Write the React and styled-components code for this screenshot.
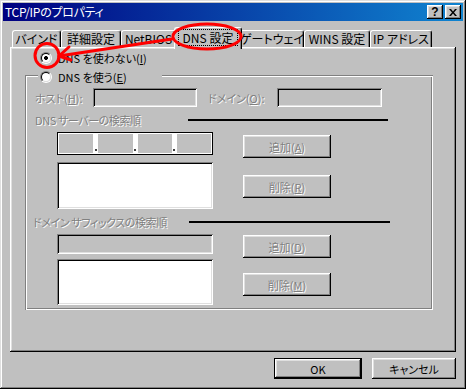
import styled, { createGlobalStyle, css } from "styled-components";

const GlobalStyle = createGlobalStyle`
    html, body {
        margin: 0;
        padding: 0;
        background: #c0c0c0;
    }
    body {
        font-family: "Noto Sans CJK JP", "Noto Sans", sans-serif;
        font-size: 11px;
        font-feature-settings: "palt";
        line-height: 16px;
        color: #000;
    }
`;

const raised = css`
    box-shadow: inset -1px -1px #000, inset 1px 1px #fff, inset -2px -2px #808080, inset 2px 2px #dfdfdf;
`;

const sunken = css`
    box-shadow: inset 1px 1px #808080, inset -1px -1px #fff, inset 2px 2px #000, inset -2px -2px #dfdfdf;
`;

const disabledText = css`
    color: #808080;
    text-shadow: 1px 1px 0 #fff;
`;

const S = {
    Window : styled.div`
        position: relative;
        box-sizing: border-box;
        width: 466px;
        height: 389px;
        padding: 3px;
        background: #c0c0c0;
        box-shadow: inset -1px -1px #000, inset 1px 1px #dfdfdf, inset -2px -2px #808080, inset 2px 2px #fff;
        display: flex;
        flex-direction: column;
    `,
    TitleBar : styled.div`
        flex: none;
        height: 18px;
        display: flex;
        align-items: center;
        gap: 2px;
        padding: 0 2px;
        background: linear-gradient(90deg, #000080, #1084d0);
        color: #fff;
    `,
    Title : styled.span`
        flex: 1;
        white-space: nowrap;
        font-size: 12px;
        letter-spacing: -0.3px;
    `,
    TitleButton : styled.div`
        box-sizing: border-box;
        width: 16px;
        height: 14px;
        display: flex;
        align-items: center;
        justify-content: center;
        background: #c0c0c0;
        color: #000;
        font-family: "Liberation Sans", sans-serif;
        font-weight: 700;
        font-size: 12px;
        ${raised}
    `,
    Body : styled.div`
        display: flex;
        flex-direction: column;
        padding: 6px 7px 0;
    `,
    TabStrip : styled.div`
        display: flex;
        align-items: flex-end;
        height: 20px;
        padding-left: 2px;
    `,
    Tab : styled.div`
        box-sizing: border-box;
        width: ${p => p.$w}px;
        height: 17px;
        display: flex;
        align-items: center;
        justify-content: center;
        background: #c0c0c0;
        border-top: 1px solid #fff;
        border-left: 1px solid #fff;
        border-right: 1px solid #000;
        border-radius: 3px 3px 0 0;
        box-shadow: inset -1px 0 #808080;
        white-space: nowrap;
        font-size: 12px;
        ${p => p.$active && css`
            width: ${p.$w + 4}px;
            height: 22px;
            margin: 0 -2px -2px;
            padding-bottom: 3px;
            position: relative;
            z-index: 1;
        `}
    `,
    FocusLabel : styled.span`
        outline: 1px dotted #000;
        padding: 0 4px;
        line-height: 15px;
    `,
    Panel : styled.div`
        box-sizing: border-box;
        height: 305px;
        padding: 3px 0 0 15px;
        display: flex;
        flex-direction: column;
        box-shadow: inset -1px -1px #000, inset 1px 1px #fff, inset -2px -2px #808080, inset 2px 2px #dfdfdf;
    `,
    RadioRow : styled.label`
        display: flex;
        align-items: center;
        gap: 6px;
        height: 16px;
        margin-left: 15px;
        white-space: nowrap;
    `,
    Legend : styled.label`
        box-sizing: border-box;
        display: flex;
        align-items: center;
        gap: 6px;
        width: 124px;
        height: 16px;
        margin: -6px 0 0 3px;
        padding-left: 2px;
        background: #c0c0c0;
        white-space: nowrap;
    `,
    Radio : styled.span`
        box-sizing: border-box;
        flex: none;
        width: 12px;
        height: 12px;
        border-radius: 50%;
        border: 1px solid;
        border-color: #808080 #fff #fff #808080;
        display: flex;
        align-items: center;
        justify-content: center;
        &::before {
            content: "";
            box-sizing: border-box;
            width: 10px;
            height: 10px;
            border-radius: 50%;
            border: 1px solid;
            border-color: #000 #dfdfdf #dfdfdf #000;
            background: ${p => p.$checked
                ? "radial-gradient(circle, #000 0 1.8px, #fff 2.2px)"
                : "#fff"};
        }
    `,
    GroupBox : styled.div`
        box-sizing: border-box;
        width: 408px;
        margin-top: 9px;
        padding: 0 0 5px 10px;
        display: flex;
        flex-direction: column;
        box-shadow: inset 1px 1px #808080, inset -1px -1px #fff, inset 2px 2px #fff, inset -2px -2px #808080;
    `,
    FieldRow : styled.div`
        display: flex;
        align-items: center;
        height: 19px;
        margin-top: 3px;
    `,
    Label : styled.span`
        box-sizing: border-box;
        width: ${p => p.$w}px;
        margin-left: ${p => p.$ml || 0}px;
        white-space: nowrap;
        letter-spacing: ${p => p.$ls || 0}px;
        ${disabledText}
    `,
    TextField : styled.div`
        box-sizing: border-box;
        width: ${p => p.$w}px;
        height: ${p => p.$h}px;
        background: #c0c0c0;
        ${sunken}
    `,
    ListBox : styled.div`
        box-sizing: border-box;
        width: 156px;
        height: ${p => p.$h}px;
        background: #fff;
        ${sunken}
    `,
    SectionRow : styled.div`
        display: flex;
        align-items: center;
        height: 16px;
        margin-top: 5px;
        margin-left: ${p => p.$ml || 0}px;
    `,
    Rule : styled.div`
        width: ${p => p.$w}px;
        height: 2px;
        background: #000;
    `,
    Block : styled.div`
        display: flex;
        margin-top: 4px;
    `,
    FieldColumn : styled.div`
        display: flex;
        flex-direction: column;
        gap: ${p => p.$gap}px;
        margin-left: 22px;
    `,
    ButtonColumn : styled.div`
        display: flex;
        flex-direction: column;
        gap: ${p => p.$gap}px;
        padding-top: ${p => p.$pt}px;
        margin-left: 30px;
    `,
    IpBox : styled.div`
        box-sizing: border-box;
        width: 156px;
        height: 23px;
        border: 1px solid #000;
        padding: 1px;
        background: #fff;
        display: flex;
    `,
    IpCell : styled.div`
        flex: 1;
        background: #c0c0c0;
    `,
    IpDot : styled.div`
        width: 5px;
        display: flex;
        align-items: flex-end;
        justify-content: center;
        padding-bottom: 2px;
        &::after {
            content: "";
            width: 2px;
            height: 2px;
            background: #404040;
        }
    `,
    Button : styled.div`
        box-sizing: border-box;
        width: ${p => p.$w || 88}px;
        height: ${p => p.$h || 23}px;
        display: flex;
        align-items: center;
        justify-content: center;
        background: #c0c0c0;
        white-space: nowrap;
        ${p => p.$disabled && disabledText}
        ${p => p.$default
            ? css`box-shadow: inset 0 0 0 1px #000, inset -2px -2px #000, inset 2px 2px #fff, inset -3px -3px #808080, inset 3px 3px #dfdfdf;`
            : raised}
    `,
    Footer : styled.div`
        display: flex;
        justify-content: flex-end;
        gap: 10px;
        margin-top: 6px;
    `,
    Overlay : styled.svg`
        position: absolute;
        left: 0;
        top: 0;
        z-index: 2;
        pointer-events: none;
    `
};

const tabs = [
    { label: "バインド", w: 49 },
    { label: "詳細設定", w: 60 },
    { label: "NetBIOS", w: 55 },
    { label: "DNS 設定", w: 64, active: true },
    { label: "ゲートウェイ", w: 64 },
    { label: "WINS 設定", w: 66 },
    { label: "IP アドレス", w: 62 },
];

const App = () => {
    return (
        <>
            <GlobalStyle />
            <S.Window>
                <S.TitleBar>
                    <S.Title>TCP/IPのプロパティ</S.Title>
                    <S.TitleButton>?</S.TitleButton>
                    <S.TitleButton>
                        <svg width="8" height="7" viewBox="0 0 8 7">
                            <path d="M0 0h2l2 2.5L6 0h2L5 3.5 8 7H6L4 4.5 2 7H0l3-3.5z" fill="#000" />
                        </svg>
                    </S.TitleButton>
                </S.TitleBar>

                <S.Body>
                    <S.TabStrip>
                        {tabs.map(t => (
                            <S.Tab key={t.label} $w={t.w} $active={t.active}>
                                {t.active ? <S.FocusLabel>{t.label}</S.FocusLabel> : t.label}
                            </S.Tab>
                        ))}
                    </S.TabStrip>

                    <S.Panel>
                        <S.RadioRow>
                            <S.Radio $checked />
                            <span>DNS を使わない(<u>I</u>)</span>
                        </S.RadioRow>

                        <S.GroupBox>
                            <S.Legend>
                                <S.Radio />
                                <span>DNS を使う(<u>E</u>)</span>
                            </S.Legend>

                            <S.FieldRow>
                                <S.Label $w={58}>ホスト(<u>H</u>):</S.Label>
                                <S.TextField $w={104} $h={19} />
                                <S.Label $w={69} $ml={11}>ドメイン(<u>O</u>):</S.Label>
                                <S.TextField $w={105} $h={19} />
                            </S.FieldRow>

                            <S.SectionRow>
                                <S.Label $w={153} $ls={-0.4}>DNS サーバーの検索順</S.Label>
                                <S.Rule $w={200} />
                            </S.SectionRow>

                            <S.Block>
                                <S.FieldColumn $gap={7}>
                                    <S.IpBox>
                                        <S.IpCell />
                                        <S.IpDot />
                                        <S.IpCell />
                                        <S.IpDot />
                                        <S.IpCell />
                                        <S.IpDot />
                                        <S.IpCell />
                                    </S.IpBox>
                                    <S.ListBox $h={47} />
                                </S.FieldColumn>
                                <S.ButtonColumn $gap={17} $pt={3}>
                                    <S.Button $disabled>追加(<u>A</u>)</S.Button>
                                    <S.Button $disabled>削除(<u>R</u>)</S.Button>
                                </S.ButtonColumn>
                            </S.Block>

                            <S.SectionRow $ml={-2}>
                                <S.Label $w={156} $ls={-0.4}>ドメイン サフィックスの検索順</S.Label>
                                <S.Rule $w={201} />
                            </S.SectionRow>

                            <S.Block>
                                <S.FieldColumn $gap={5}>
                                    <S.TextField $w={156} $h={20} />
                                    <S.ListBox $h={46} />
                                </S.FieldColumn>
                                <S.ButtonColumn $gap={15} $pt={1}>
                                    <S.Button $disabled>追加(<u>D</u>)</S.Button>
                                    <S.Button $disabled>削除(<u>M</u>)</S.Button>
                                </S.ButtonColumn>
                            </S.Block>
                        </S.GroupBox>
                    </S.Panel>

                    <S.Footer>
                        <S.Button $default $w={88} $h={21}>OK</S.Button>
                        <S.Button $w={84} $h={21}>キャンセル</S.Button>
                    </S.Footer>
                </S.Body>

                {/* red annotation drawn over the dialog */}
                <S.Overlay width="466" height="389" viewBox="0 0 466 389">
                    <g fill="none" stroke="#f00" strokeWidth="3" strokeLinecap="round" strokeLinejoin="round">
                        <ellipse cx="207" cy="36.5" rx="34" ry="12.5" />
                        <circle cx="47" cy="55.5" r="12" />
                        <path d="M172 39 L59 56" />
                        <path d="M69 47 L59 56 L71 60" />
                    </g>
                </S.Overlay>
            </S.Window>
        </>
    );
};

export default App;
